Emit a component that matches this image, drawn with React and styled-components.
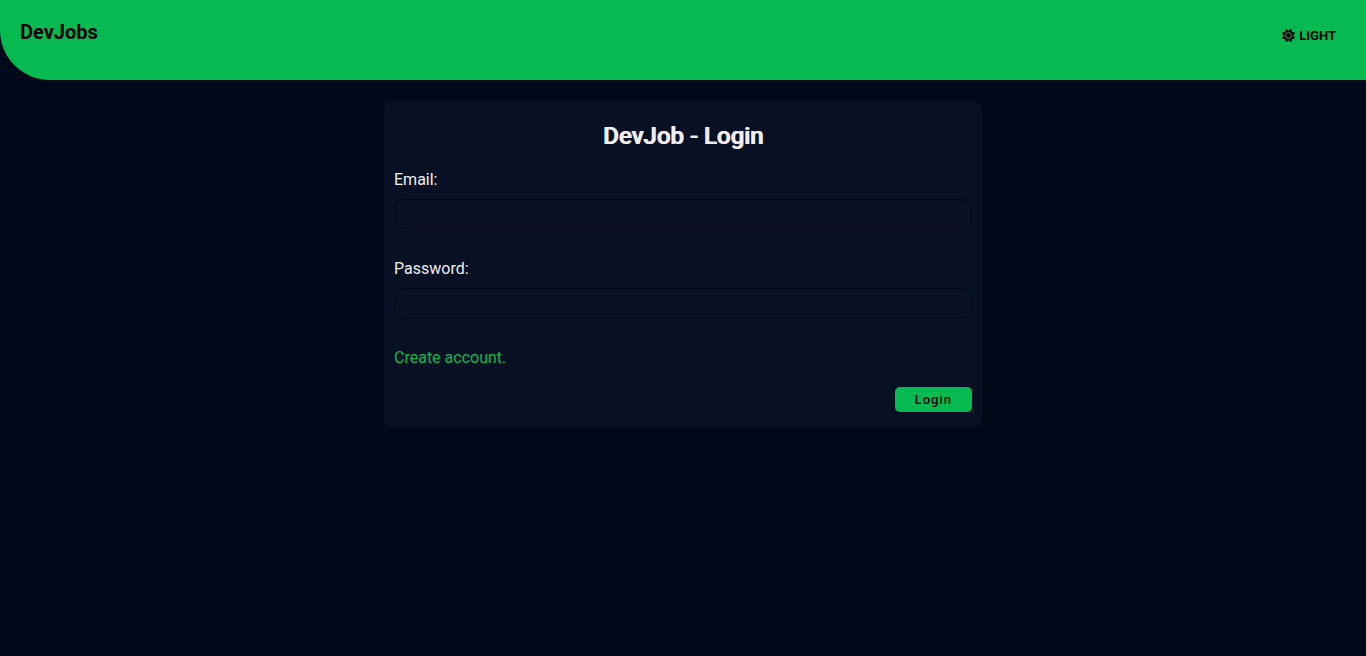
import React from "react";
import styled, { createGlobalStyle } from "styled-components";
import { FaSun } from "react-icons/fa6";

const GlobalStyle = createGlobalStyle`
  * { box-sizing: border-box; margin: 0; padding: 0; }
  body { background: #000919; color: #eee; font-family: Roboto, sans-serif; font-size: 16px; }
`;

const Header = styled.header`
  display: flex;
  justify-content: space-between;
  height: 80px;
  padding: 20px;
  background: #06b950;
  color: #000;
  border-bottom-left-radius: 50px;
`;

const Brand = styled.h1`
  font-size: 20px;
  font-weight: 700;
  line-height: 24px;
`;

const ThemeButton = styled.button`
  display: flex;
  align-items: center;
  align-self: flex-start;
  gap: 4px;
  height: 30px;
  padding: 0 10px;
  border: 0;
  background: transparent;
  color: #000;
  font: 700 13px Roboto, sans-serif;
  cursor: pointer;
`;

const Card = styled.form`
  display: flex;
  flex-direction: column;
  width: calc(100% - 40px);
  max-width: 600px;
  margin: 20px auto;
  padding: 20px 10px 15px;
  border: 1px solid #020a18;
  border-radius: 10px;
  background: #081024;
`;

const Title = styled.h2`
  margin-bottom: 19px;
  font-size: 24px;
  font-weight: 500;
  line-height: 30px;
  text-align: center;
  text-shadow: 1px 0 currentColor;
`;

const Field = styled.div`
  display: flex;
  flex-direction: column;
  gap: 10px;
  margin-bottom: 30px;
`;

const Label = styled.label`
  line-height: 19px;
`;

const Input = styled.input`
  width: 100%;
  height: 30px;
  padding: 0 10px;
  border: 1px solid #020710;
  border-radius: 10px;
  outline: none;
  background: transparent;
  color: #eee;
  font: 400 14px Roboto, sans-serif;
`;

const AccountLink = styled.a`
  align-self: flex-start;
  margin-bottom: 20px;
  color: #06b950;
  line-height: 19px;
  text-decoration: none;
`;

const SubmitButton = styled.button`
  align-self: flex-end;
  height: 25px;
  padding: 0 20px;
  border: 0;
  border-radius: 5px;
  background: #06b950;
  color: #000;
  font: 500 13px Roboto, sans-serif;
  letter-spacing: 1px;
  cursor: pointer;
`;

export default function App() {
  return (
    <>
      <GlobalStyle />
      <Header>
        <Brand>DevJobs</Brand>
        <ThemeButton type="button"><FaSun aria-hidden="true" />LIGHT</ThemeButton>
      </Header>
      <main>
        <Card onSubmit={(event) => event.preventDefault()}>
          <Title>DevJob - Login</Title>
          <Field>
            <Label htmlFor="email">Email:</Label>
            <Input id="email" type="email" />
          </Field>
          <Field>
            <Label htmlFor="password">Password:</Label>
            <Input id="password" type="password" />
          </Field>
          <AccountLink href="#register">Create account.</AccountLink>
          <SubmitButton type="submit">Login</SubmitButton>
        </Card>
      </main>
    </>
  );
}
